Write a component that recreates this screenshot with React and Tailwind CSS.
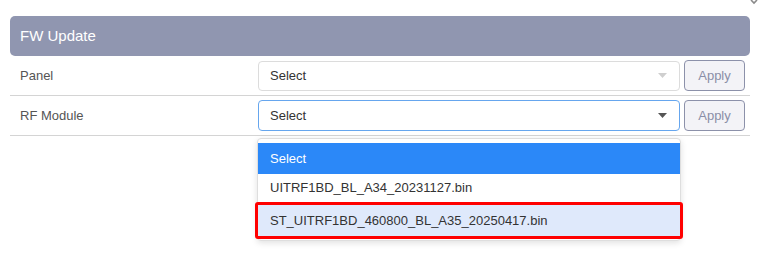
export default function App() {
  const font = { fontFamily: '"Liberation Sans", Arial, sans-serif' };
  return (
    <div className="relative w-[764px] h-[280px] bg-white" style={font}>
      <svg className="absolute right-[6px] top-0" width="8" height="5" viewBox="0 0 8 5">
        <path d="M1 0 L4 3 L7 0" fill="none" stroke="#8a8a8a" strokeWidth="1.6" />
      </svg>
      <div className="pt-[16px] pl-[10px] w-[750px]">
        <div className="h-[40px] bg-[#9096b0] rounded-[5px] flex items-center px-[10px] text-white text-[15px]">
          FW Update
        </div>

        <div className="flex items-center h-[40px] border-b border-[#d4d4d4] pr-[5px]">
          <div className="w-[248px] pl-[10px] text-[13px] text-[#555]">Panel</div>
          <div className="flex-1 h-[30px] border border-[#dcdcdc] rounded-[4px] flex items-center justify-between pl-[11px] pr-[12px] text-[13px] text-[#333]">
            <span>Select</span>
            <svg width="9" height="5" viewBox="0 0 9 5"><path d="M0 0 L9 0 L4.5 5 Z" fill="#cfcfcf" /></svg>
          </div>
          <button className="ml-[4px] w-[61px] h-[31px] border border-[#8c91aa] rounded-[4px] bg-[#f3f3f7] text-[#8a8ea6] text-[13px]">
            Apply
          </button>
        </div>

        <div className="relative flex items-center h-[40px] border-b border-[#d4d4d4] pr-[5px]">
          <div className="w-[248px] pl-[10px] text-[13px] text-[#555]">RF Module</div>
          <div className="flex-1 h-[31px] border border-[#66a6ee] rounded-[4px] flex items-center justify-between pl-[11px] pr-[12px] text-[13px] text-[#333]">
            <span>Select</span>
            <svg width="9" height="5" viewBox="0 0 9 5"><path d="M0 0 L9 0 L4.5 5 Z" fill="#555" /></svg>
          </div>
          <button className="ml-[4px] w-[61px] h-[31px] border border-[#8c91aa] rounded-[4px] bg-[#f3f3f7] text-[#8a8ea6] text-[13px]">
            Apply
          </button>

          <div className="absolute left-[247px] top-[42px] w-[424px] bg-white border border-[#dedede] rounded-[4px] shadow-[0_2px_6px_rgba(0,0,0,0.12)] pt-[4px] pb-[1px] text-[13px]">
            <div className="h-[31px] bg-[#2b88f8] text-white flex items-center pl-[12px]">Select</div>
            <div className="h-[28px] text-[#333] flex items-center pl-[12px]">UITRF1BD_BL_A34_20231127.bin</div>
            <div className="relative -mx-[3px] h-[37px] bg-[#dfe9fb] border-[3px] border-[#ff0000] rounded-[3px] text-[#333] flex items-center pl-[12px]">
              ST_UITRF1BD_460800_BL_A35_20250417.bin
            </div>
          </div>
        </div>
      </div>
    </div>
  );
}
